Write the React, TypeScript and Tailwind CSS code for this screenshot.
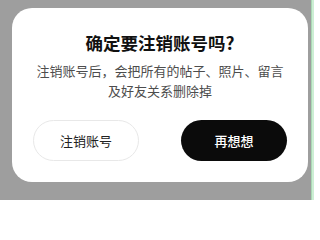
export default function App() {
  return (
    <div className="flex h-[200px] w-[314px] bg-[#9e9e9e] font-['Noto_Sans_CJK_SC',sans-serif]">
      <div className="flex-1 pl-3 pr-[3px] pt-2">
        <div className="flex h-[174px] w-[296px] flex-col rounded-[20px] bg-white px-[21px] pt-[23px]">
          <h2 className="text-center text-[17.5px] font-semibold leading-[24px] text-[#111]">
            确定要注销账号吗?
          </h2>
          <p className="mt-[6px] text-center text-[13px] leading-[20px] text-[#4d4d4d]">
            注销账号后，会把所有的帖子、照片、留言及好友关系删除掉
          </p>
          <div className="mt-[19px] flex justify-between">
            <button className="h-[41px] w-[106px] rounded-full border border-[#e8e8e8] bg-white text-[13px] text-[#222]">
              注销账号
            </button>
            <button className="h-[41px] w-[106px] rounded-full bg-[#0b0b0b] text-[13px] font-medium text-white">
              再想想
            </button>
          </div>
        </div>
      </div>
      <div className="w-px bg-[#a9d8b4]" />
      <div className="w-[2px] bg-[#cdeed4]" />
    </div>
  );
}
